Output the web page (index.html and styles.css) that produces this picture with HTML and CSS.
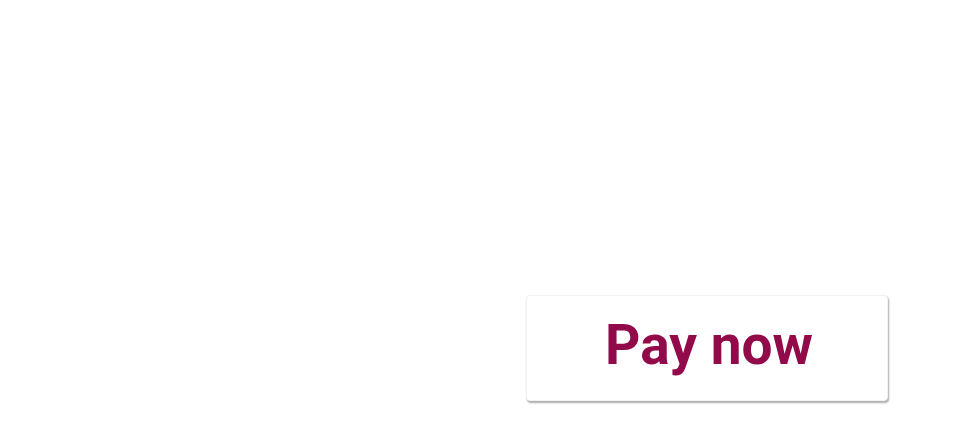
FILE: index.html
```html
<!DOCTYPE html>
<html>
<head>
<meta charset="utf-8">
<link rel="stylesheet" href="styles.css">
</head>
<body>
<div class="page">
  <button class="pay-btn">Pay now</button>
</div>
</body>
</html>
```
FILE: styles.css
```css
html, body {
  margin: 0;
  padding: 0;
  background: #ffffff;
}
.page {
  width: 972px;
  height: 444px;
  display: flex;
  justify-content: flex-end;
  align-items: flex-start;
  padding: 295px 84px 0 0;
  box-sizing: border-box;
}
.pay-btn {
  width: 362px;
  height: 106px;
  background: #ffffff;
  border: 1px solid #f2f2f2;
  border-radius: 4px;
  box-shadow: 1px 2px 2px rgba(0,0,0,0.32), 0 0 1px rgba(0,0,0,0.08);
  font-family: Roboto, "Liberation Sans", sans-serif;
  font-weight: 700;
  font-size: 55px;
  color: #930a4a;
  padding: 0 0 6px 4px;
  cursor: pointer;
}
```
